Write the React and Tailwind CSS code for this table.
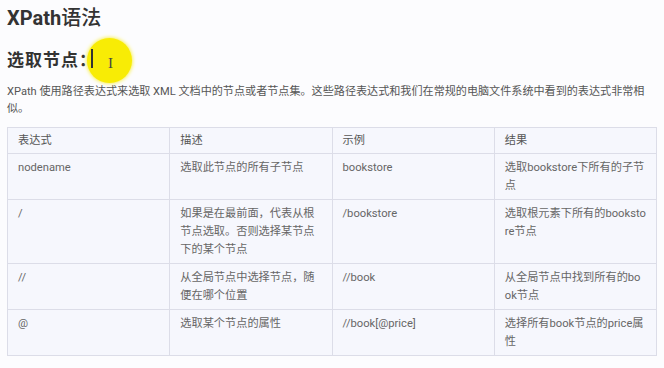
import React from 'react'

const rows = [
  ['nodename', '选取此节点的所有子节点', 'bookstore', '选取bookstore下所有的子节点'],
  ['/', '如果是在最前面，代表从根节点选取。否则选择某节点下的某个节点', '/bookstore', '选取根元素下所有的bookstore节点'],
  ['//', '从全局节点中选择节点，随便在哪个位置', '//book', '从全局节点中找到所有的book节点'],
  ['@', '选取某个节点的属性', '//book[@price]', '选择所有book节点的price属性'],
]

const heights = ['h-[46px]', 'h-[64px]', 'h-[45px]', 'h-[45px]']

export default function App() {
  return (
    <div className="w-[664px] h-[368px] overflow-hidden bg-[#fcfcfe] px-[7px] pt-[4px] font-['Roboto','Noto_Sans_CJK_SC',sans-serif] text-[#555]">
      <h1 className="h-[28px] text-[20px] leading-[28px] text-[#333]">
        <span className="font-bold">XPath</span>
        <span className="font-medium">语法</span>
      </h1>

      <div className="relative mt-[14px] flex h-[26px] items-center">
        <span className="font-['Noto_Sans_CJK_SC',serif] text-[17px] font-bold tracking-[1px] text-[#333]">选取节点：</span>
        <div className="absolute left-[80px] top-[-8px] h-[45px] w-[45px] rounded-full bg-[#f8ec05] shadow-[0_0_4px_#f8ec05]" />
        <span className="absolute left-[84px] top-[3px] h-[19px] w-[1.5px] bg-[#333]" />
        <span className="absolute left-[101px] top-[10px] font-['Liberation_Serif',serif] text-[15px] leading-none text-[#444]">I</span>
      </div>

      <p className="mt-[11px] w-[640px] text-[11.1px] leading-[17px] text-[#555]">
        XPath 使用路径表达式来选取 XML 文档中的节点或者节点集。这些路径表达式和我们在常规的电脑文件系统中看到的表达式非常相似。
      </p>

      <table className="mt-[10px] w-[650px] table-fixed border-collapse bg-[#f6f7fd] text-[11.2px] leading-[18px] text-[#666]">
        <thead>
          <tr className="h-[26px]">
            {['表达式', '描述', '示例', '结果'].map((h) => (
              <th key={h} className="border border-[#dcdde8] px-[10px] text-left font-normal text-[#555]">
                {h}
              </th>
            ))}
          </tr>
        </thead>
        <tbody>
          {rows.map((r, i) => (
            <tr key={i} className={heights[i]}>
              {r.map((c, j) => (
                <td key={j} className="break-all border border-[#dcdde8] px-[10px] pt-[5px] pb-[4px] align-top">
                  {c}
                </td>
              ))}
            </tr>
          ))}
        </tbody>
      </table>
    </div>
  )
}
